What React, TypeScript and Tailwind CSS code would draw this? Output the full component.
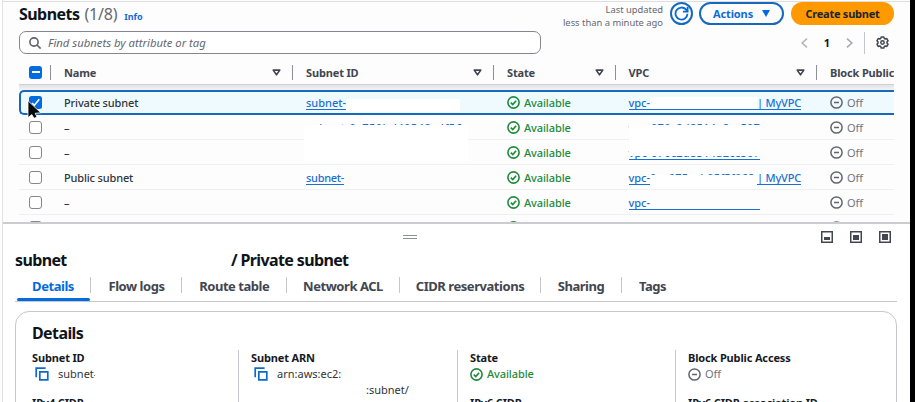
import React from "react";

function StatusOk() {
  return (
    <svg className="size-[13px] shrink-0" viewBox="0 0 13 13" fill="none" stroke="#1f8a3c" strokeWidth="1.6">
      <circle cx="6.5" cy="6.5" r="5.6" />
      <path d="M3.8 6.7 5.8 8.6 9.1 4.7" />
    </svg>
  );
}

function StatusOff() {
  return (
    <svg className="size-[13px] shrink-0" viewBox="0 0 13 13" fill="none" stroke="#62666d" strokeWidth="1.5">
      <circle cx="6.5" cy="6.5" r="5.6" />
      <path d="M4 6.5h5" />
    </svg>
  );
}

function SortIcon() {
  return (
    <svg className="h-[7px] w-[9px] shrink-0" viewBox="0 0 9 7" fill="none" stroke="#424650" strokeWidth="1.6" strokeLinejoin="round">
      <path d="M1.2 1.1h6.6L4.5 5.8z" />
    </svg>
  );
}

function CopyIcon() {
  return (
    <svg className="size-[14px] shrink-0" viewBox="0 0 14 14" fill="none" stroke="#0f68cf" strokeWidth="1.7">
      <path d="M4.8 4.8h8v8h-8z" />
      <path d="M1.2 10.2V1.2h9.4" />
    </svg>
  );
}

function Available() {
  return (
    <span className="flex items-center gap-[4px] font-medium tracking-[-0.1px] text-[#1f8a3c]">
      <StatusOk />
      Available
    </span>
  );
}

function Off() {
  return (
    <span className="flex items-center gap-[4px] text-[#70757d]">
      <StatusOff />
      Off
    </span>
  );
}

const columns = "grid grid-cols-[31px_242px_201px_121.5px_201.5px_78px]";

function HeadCell({ label, sort = true }: { label: string; sort?: boolean }) {
  return (
    <div className="flex h-[15px] items-center justify-between whitespace-nowrap border-l border-[#8c8f96] pl-[13px] pr-[11px]">
      <span className="pt-px">{label}</span>
      {sort && <SortIcon />}
    </div>
  );
}

function Link({ children }: { children: React.ReactNode }) {
  return <span className="mt-px h-[13px] whitespace-pre border-b border-[#1b6fd0] font-medium leading-[12px] text-[#1b6fd0]">{children}</span>;
}

type Row = { name: string; subnet: React.ReactNode; vpc: React.ReactNode; selected?: boolean };

const rows: Row[] = [
  {
    name: "Private subnet",
    selected: true,
    subnet: (
      <>
        <Link>subnet-0dbac1ab070000ca</Link>
        <span className="absolute left-[54px] top-[9px] h-[13px] w-[114px] bg-white" />
      </>
    ),
    vpc: (
      <>
        <Link>vpc-</Link>
        <span className="mt-px h-[13px] w-[107px] border-b border-[#1b6fd0] bg-white" />
        <span className="flex tracking-[-0.2px]"><Link>| MyVPC</Link></span>
      </>
    ),
  },
  {
    name: "–",
    subnet: (
      <>
        <span className="tracking-[0.5px]"><Link>subnet-0c750bd40542cdf56</Link></span>
        <span className="absolute left-[12px] top-[10px] h-[36px] w-[164px] bg-white" />
      </>
    ),
    vpc: (
      <>
        <span className="flex tracking-[0.25px]"><Link>vpc-070c2d8514a2cc507</Link></span>
        <span className="absolute left-[14px] top-[10px] h-[15px] w-[131px] bg-white" />
      </>
    ),
  },
  {
    name: "–",
    subnet: null,
    vpc: (
      <>
        <span className="flex tracking-[0.25px]"><Link>vpc-070c2d8514a2cc507</Link></span>
        <span className="absolute left-[14px] top-0 h-[16px] w-[131px] bg-white" />
      </>
    ),
  },
  {
    name: "Public subnet",
    subnet: <span className="flex tracking-[-0.3px]"><Link>subnet-</Link></span>,
    vpc: (
      <>
        <Link>vpc-</Link>
        <span className="flex w-[107px] font-medium leading-[12px] tracking-[0.2px] text-[#1b6fd0]">0ca075cab05f5f068</span>
        <span className="flex tracking-[-0.2px]"><Link>| MyVPC</Link></span>
        <span className="absolute left-[35px] top-[10px] h-[12px] w-[107px] bg-white" />
      </>
    ),
  },
  {
    name: "–",
    subnet: null,
    vpc: (
      <>
        <Link>vpc-</Link>
        <span className="mt-px h-[13px] w-[110px] border-b border-[#1b6fd0]" />
      </>
    ),
  },
];

const cell = "relative flex h-[25px] items-center ";

function TableRow({ row }: { row: Row }) {
  return (
    <div
      className={
        columns +
        " h-[25px] items-start " +
        (row.selected
          ? "rounded-l-[5px] border-y-2 border-l-2 border-[#1769bd] bg-[#effaff] [&>*]:-ml-[2px] [&>*]:-mt-[2px]"
          : "border-b border-[#f0f0f2]")
      }
    >
      <div className={cell + "pl-[10px]"}>
        {row.selected ? (
          <svg className="size-[13px]" viewBox="0 0 13 13" fill="none">
            <rect width="13" height="13" rx="2.5" fill="#006ce0" />
            <path d="M3 7 5.3 9.3 10.3 3.2" stroke="white" strokeWidth="1.6" />
          </svg>
        ) : (
          <div className="size-[13px] rounded-[3px] border border-[#85878d] bg-white" />
        )}
      </div>
      <div className={cell + "pl-[14px] font-medium tracking-[-0.15px]"}>{row.name}</div>
      <div className={cell + "pl-[14px]"}>{row.subnet}</div>
      <div className={cell + "pl-[14px]"}><Available /></div>
      <div className={cell + "pl-[14px]"}>{row.vpc}</div>
      <div className={cell + "pl-[14px]"}><Off /></div>
    </div>
  );
}

function PanelIcon({ variant }: { variant: "small" | "medium" | "full" }) {
  const top = { small: 6, medium: 4, full: 3 }[variant];
  return (
    <svg className="size-[12px]" viewBox="0 0 12 12" fill="none">
      <rect x="0.75" y="0.75" width="10.5" height="10.5" stroke="#424650" strokeWidth="1.5" />
      <rect x="3" y={top} width="6" height={9 - top} fill="#424650" />
    </svg>
  );
}

const tabs = [
  { label: "Details", box: "w-[76px] text-[#006ce0]" },
  { label: "Flow logs", box: "w-[91px]" },
  { label: "Route table", box: "w-[104.5px]" },
  { label: "Network ACL", box: "w-[113px]" },
  { label: "CIDR reservations", box: "w-[141px]" },
  { label: "Sharing", box: "w-[81px]" },
  { label: "Tags", box: "w-[62px]" },
];

export default function App() {
  return (
    <div className="flex h-[402px] w-[915px] overflow-hidden bg-white font-['Noto_Sans','Open_Sans',sans-serif] text-[11px] leading-[16px] text-[#30343b]">
      <main className="ml-[2px] flex w-[908px] shrink-0 flex-col overflow-hidden border-l border-[#e2e2e4]">
        <section className="h-[222px] shrink-0 overflow-hidden bg-[#fdfdfd] pl-[16px] pr-[16px]">
          <div className="-ml-4 -mr-4 mt-px h-px bg-[#dedee0]" />
          <header className="flex h-[24px] items-start">
            <h1 className="pt-[2px] text-[16px] font-bold leading-[20px] tracking-[-0.55px] text-[#0f141a]">Subnets</h1>
            <span className="pl-[5px] pt-[2px] text-[16px] leading-[20px] tracking-[-0.2px] text-[#656871]">(1/8)</span>
            <span className="pl-[7px] pt-[8px] text-[9px] font-bold leading-[14px] text-[#0f6bd6]">Info</span>
            <p className="ml-auto pt-[1px] text-right text-[9.4px] leading-[13px] text-[#656871]">Last updated<br />less than a minute ago</p>
            <button className="ml-[7px] grid h-[23px] w-[23px] place-items-center rounded-full border-2 border-[#1769bd]">
              <svg className="size-[15px]" viewBox="0 0 14 14" fill="none" stroke="#0969d2" strokeWidth="1.7">
                <path d="M12.6 7.3a5.6 5.6 0 1 1-1.5-4.1l1.3 1.5" />
                <path d="M12.7.8v4.4H8.3" />
              </svg>
            </button>
            <button className="ml-[6px] flex h-[23px] w-[85px] items-center justify-center gap-[9px] rounded-full border-2 border-[#1769bd] font-bold tracking-[-0.1px] text-[#0f6bd6]">
              Actions
              <svg className="h-[7px] w-[8px]" viewBox="0 0 8 7" fill="#006ce0"><path d="M0 0h8L4 7z" /></svg>
            </button>
            <button className="ml-[7px] h-[23px] w-[103px] rounded-full bg-[#ff9900] font-bold tracking-[-0.25px] text-[#20242a]">Create subnet</button>
          </header>
          <div className="mt-[5px] flex h-[23px] items-center">
            <div className="flex h-[23px] w-[522px] items-center gap-[7px] rounded-[7px] border border-[#85878d] bg-white pl-[9px] text-[11.3px] italic text-[#656871]">
              <svg className="size-[12px]" viewBox="0 0 12 12" fill="none" stroke="#5f636b" strokeWidth="1.6">
                <circle cx="5" cy="5" r="4.1" /><path d="m8 8 3.6 3.6" />
              </svg>
              Find subnets by attribute or tag
            </div>
            <div className="ml-auto flex h-[23px] items-center pr-[5px]">
              <svg className="h-[10px] w-[7px]" viewBox="0 0 7 10" fill="none" stroke="#b4b7bd" strokeWidth="1.6"><path d="M6 .7 1.2 5 6 9.3" /></svg>
              <span className="w-[38px] text-center font-bold text-[#0f141a]">1</span>
              <svg className="h-[10px] w-[7px]" viewBox="0 0 7 10" fill="none" stroke="#a6a9af" strokeWidth="1.6"><path d="M1 .7 5.8 5 1 9.3" /></svg>
              <span className="ml-[11px] mr-[11px] h-[22px] w-px bg-[#c6c6cd]" />
              <svg className="size-[13px]" viewBox="0 0 13 13" fill="none" stroke="#424650" strokeWidth="1.5" strokeLinejoin="round">
                <path d="M5.2.9h2.6l.4 1.5 1 .6 1.6-.4 1.3 2.2-1.1 1.1v1.2l1.1 1.1-1.3 2.2-1.6-.4-1 .6-.4 1.5H5.2l-.4-1.5-1-.6-1.6.4L.9 8.2 2 7.100V5.900L.9 4.800l1.300-2.200 1.600.4 1-.6z" />
                <circle cx="6.5" cy="6.5" r="1.7" />
              </svg>
            </div>
          </div>
          <div className={columns + " mt-[6px] h-[25px] items-center border-b border-[#cfcfd4] font-bold tracking-[-0.15px] text-[#424650]"}>
            <div className="pl-[10px]">
              <div className="grid size-[13px] place-items-center rounded-[3px] bg-[#006ce0]"><span className="h-[2px] w-[8px] bg-white" /></div>
            </div>
            <HeadCell label="Name" />
            <HeadCell label="Subnet ID" />
            <HeadCell label="State" />
            <HeadCell label="VPC" />
            <div className="overflow-hidden"><HeadCell label="Block Public" sort={false} /></div>
          </div>
          <div className="h-[5px] bg-gradient-to-b from-[#e3e3e5] to-[#f3f3f4]" />
          <div className="relative">
            {rows.map((row, i) => <TableRow key={i} row={row} />)}
            <TableRow row={{ name: "", subnet: null, vpc: null }} />
            <svg className="absolute left-[8px] top-[10px] h-[20px] w-[15px]" viewBox="0 0 15 20">
              <path d="M1 .8v16.800l3.800-3.100 2.200 3.800 3-1.300-1.800-3.700 5.600-.5z" fill="#080808" stroke="#fff" strokeWidth=".8" />
            </svg>
          </div>
        </section>

        <section className="flex grow flex-col border-t-2 border-[#cbcbd0] bg-white pl-[12px] pr-[13px]">
          <div className="flex h-[25px] items-center">
            <div className="ml-[388px] h-[4px] w-[14px] border-y border-[#8c8f96]" />
            <div className="ml-auto mr-[6px] flex gap-[17px]">
              <PanelIcon variant="small" />
              <PanelIcon variant="medium" />
              <PanelIcon variant="full" />
            </div>
          </div>
          <h2 className="flex h-[22px] items-center whitespace-nowrap text-[16px] font-bold leading-[20px] tracking-[-0.63px] text-[#0f141a]">
            <span className="mr-[164px] w-[52px] overflow-hidden">subnet-</span>
            <span>/ Private subnet</span>
          </h2>
          <nav className="flex h-[31px] shrink-0 border-b border-[#c6c6cd] text-[13px] font-bold text-[#424650]">
            {tabs.map((tab, i) => (
              <div key={tab.label} className={"relative flex h-[29px] shrink-0 items-center justify-center whitespace-nowrap tracking-[-0.45px] " + tab.box}>
                {tab.label}
                {i < tabs.length - 1 && <span className="absolute right-0 top-[6px] h-[16px] w-px bg-[#c6c6cd]" />}
                {i === 0 && <span className="absolute -bottom-px left-[2px] h-[3px] w-[73px] rounded-full bg-[#006ce0]" />}
              </div>
            ))}
          </nav>
          <div className="mt-[9px] h-[130px] shrink-0 rounded-t-[14px] border border-[#c6c6cd] pl-[16px]">
            <h3 className="pt-[10px] text-[16px] font-bold leading-[22px] tracking-[-0.6px] text-[#0f141a]">Details</h3>
            <div className="mt-[6px] grid grid-cols-[206px_219px_218px_200px]">
              <div className="h-[60px]">
                <p className="font-bold tracking-[-0.15px] text-[#16191f]">Subnet ID</p>
                <p className="flex items-center gap-[9px] pl-[3px]"><CopyIcon /><span className="w-[37px] overflow-hidden">subnet-</span></p>
                <p className="mt-[13px] font-bold tracking-[-0.15px] text-[#16191f]">IPv4 CIDR</p>
              </div>
              <div className="h-[60px] border-l border-[#c6c6cd] pl-[12px]">
                <p className="font-bold tracking-[-0.15px] text-[#16191f]">Subnet ARN</p>
                <p className="flex items-center gap-[9px] pl-[3px]"><CopyIcon /><span className="w-[65px] overflow-hidden">arn:aws:ec2:u</span></p>
                <p className="pl-[115px]">:subnet/</p>
              </div>
              <div className="h-[60px] border-l border-[#c6c6cd] pl-[12px]">
                <p className="font-bold tracking-[-0.15px] text-[#16191f]">State</p>
                <Available />
                <p className="mt-[13px] font-bold tracking-[-0.15px] text-[#16191f]">IPv6 CIDR</p>
              </div>
              <div className="h-[60px] whitespace-nowrap border-l border-[#c6c6cd] pl-[12px]">
                <p className="font-bold tracking-[-0.15px] text-[#16191f]">Block Public Access</p>
                <Off />
                <p className="mt-[13px] font-bold tracking-[-0.15px] text-[#16191f]">IPv6 CIDR association ID</p>
              </div>
            </div>
          </div>
        </section>
      </main>
      <div className="w-[5px] shrink-0 bg-black" />
    </div>
  );
}
